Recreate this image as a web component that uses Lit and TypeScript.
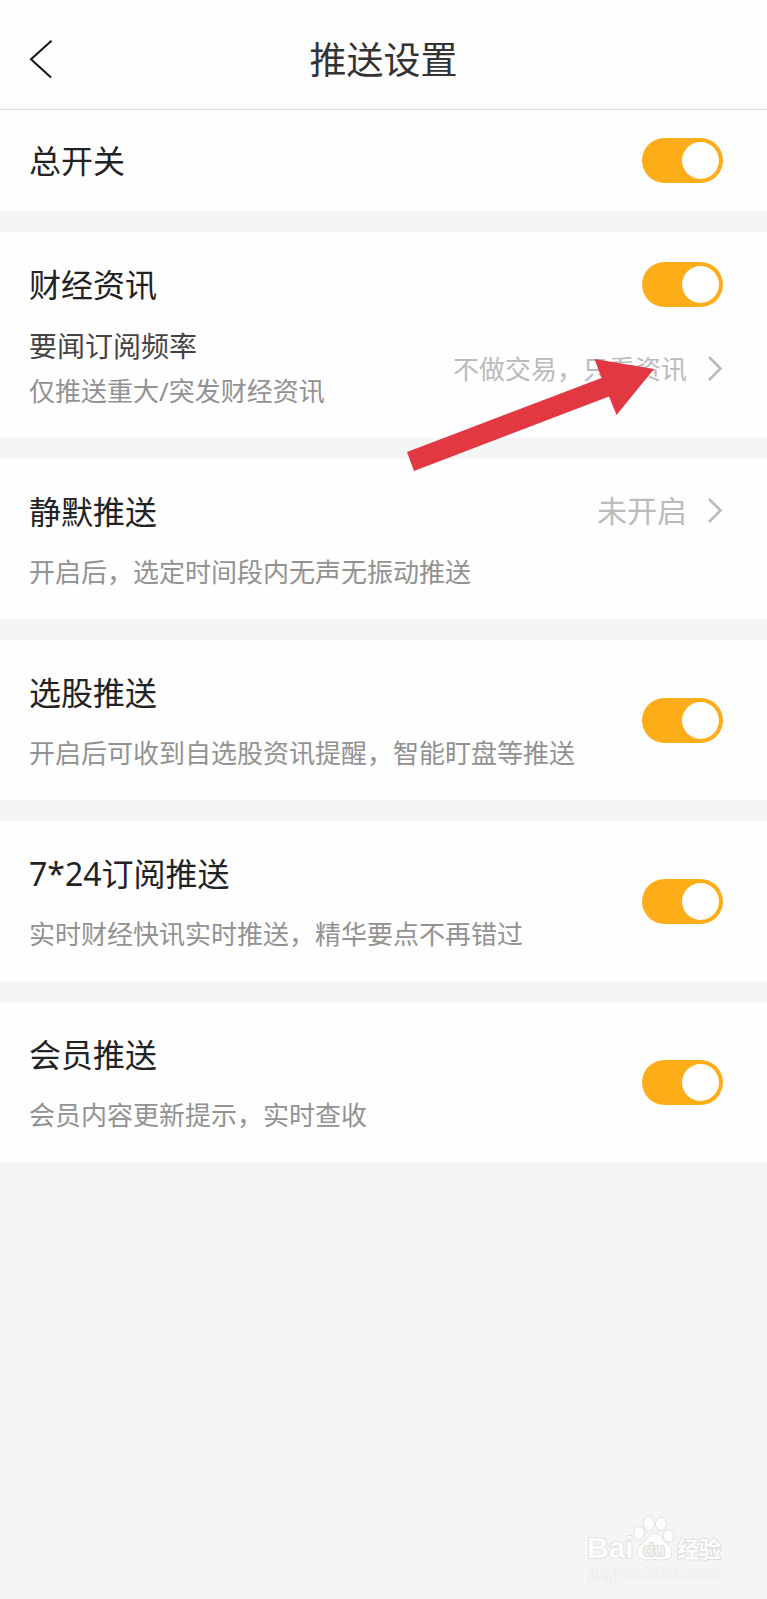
import { LitElement, html, css, svg, nothing } from "lit";
import { customElement, property } from "lit/decorators.js";

const chevron = html`<svg class="chevron" viewBox="0 0 16 26" aria-hidden="true">
  <path d="M2 1 13.500 12.500 2 24" fill="none" stroke="currentColor" stroke-width="2.6" />
</svg>`;

@customElement("toggle-switch")
class ToggleSwitch extends LitElement {
  @property() label = "";

  static styles = css`
    :host {
      display: block;
      flex: none;
    }
    .switch {
      appearance: none;
      display: flex;
      align-items: center;
      box-sizing: border-box;
      width: 81px;
      height: 45px;
      margin: 0;
      padding: 4px;
      border-radius: 23px;
      background: #d8d8d8;
      cursor: pointer;
    }
    .switch::before {
      content: "";
      width: 37px;
      height: 37px;
      border-radius: 50%;
      background: #fff;
    }
    .switch:checked {
      background: #fcad18;
      justify-content: flex-end;
    }
  `;

  render() {
    return html`<input class="switch" type="checkbox" role="switch" aria-label=${this.label} checked />`;
  }
}

@customElement("setting-row")
class SettingRow extends LitElement {
  @property() heading = "";
  @property() note = "";
  @property() value = "";

  static styles = css`
    :host {
      display: block;
      background: #fefefe;
    }
    .row {
      display: flex;
      align-items: center;
      justify-content: space-between;
      gap: 16px;
      padding: 28px 44px 28px 29px;
    }
    .row.detailed {
      padding-top: 25px;
      padding-bottom: 24px;
    }
    .detailed .texts {
      padding-top: 5px;
    }
    .texts {
      display: flex;
      flex-direction: column;
      gap: 16px;
    }
    .heading,
    .note {
      margin: 0;
      font-weight: 400;
      line-height: 45px;
    }
    .heading {
      font-size: 32px;
      color: #222;
    }
    .note {
      font-size: 26px;
      color: #929292;
    }
    .value {
      display: flex;
      align-items: center;
      align-self: flex-start;
      gap: 20px;
      flex: none;
      padding: 4px 0 0;
      border: 0;
      background: none;
      font: inherit;
      font-size: 30px;
      line-height: 45px;
      color: #bbb;
      cursor: pointer;
    }
    .chevron {
      width: 16px;
      height: 26px;
    }
  `;

  render() {
    return html`<div class="row ${this.note ? "detailed" : ""}">
      <div class="texts">
        <h2 class="heading">${this.heading}</h2>
        ${this.note ? html`<p class="note">${this.note}</p>` : nothing}
      </div>
      ${this.value
        ? html`<button class="value">${this.value}${chevron}</button>`
        : html`<toggle-switch .label=${this.heading}></toggle-switch>`}
    </div>`;
  }
}

@customElement("news-section")
class NewsSection extends LitElement {
  static styles = css`
    :host {
      display: block;
      position: relative;
      background: #fefefe;
    }
    .section {
      display: flex;
      flex-direction: column;
      gap: 17px;
      padding: 30px 44px 24px 29px;
    }
    .line {
      display: flex;
      align-items: center;
      justify-content: space-between;
      gap: 16px;
    }
    .heading,
    .sub,
    .note {
      margin: 0;
      font-weight: 400;
      line-height: 45px;
    }
    .heading {
      font-size: 32px;
      color: #222;
    }
    .sub {
      font-size: 28px;
      color: #444;
    }
    .note {
      font-size: 26px;
      color: #929292;
    }
    .value {
      display: flex;
      align-items: center;
      gap: 20px;
      flex: none;
      padding: 0;
      border: 0;
      background: none;
      font: inherit;
      font-size: 26px;
      line-height: 45px;
      color: #bbb;
      cursor: pointer;
    }
    .chevron {
      width: 16px;
      height: 26px;
    }
    .pointer {
      position: absolute;
      top: 127px;
      right: 113px;
      width: 247px;
      height: 112px;
      z-index: 1;
      pointer-events: none;
    }
  `;

  render() {
    return html`<div class="section">
        <div class="line">
          <h2 class="heading">财经资讯</h2>
          <toggle-switch .label=${"财经资讯"}></toggle-switch>
        </div>
        <div class="line">
          <div>
            <h3 class="sub">要闻订阅频率</h3>
            <p class="note">仅推送重大/突发财经资讯</p>
          </div>
          <button class="value">不做交易，只看资讯${chevron}</button>
        </div>
      </div>
      <svg class="pointer" viewBox="0 0 247 112" aria-hidden="true">
        <path d="M0 93 194.500 19 187.500 0 247 10 209.500 56 202 37.500 7 112Z" fill="#e23842" />
      </svg>`;
  }
}

const paw = svg`
  <ellipse cx="19" cy="18" rx="5" ry="6.500" />
  <ellipse cx="29" cy="8.500" rx="5" ry="7" />
  <ellipse cx="41" cy="9" rx="5" ry="6.500" />
  <ellipse cx="48.500" cy="21" rx="5" ry="6" />
  <path d="M35 19C29 19 27 24 23 28C18 32 16 36 18 40C20 45 26 45 34.500 44C43 45 49 45 51 40C52 35 50 32 46 28C42 24 41 19 35 19Z" />`;

@customElement("app-root")
class AppRoot extends LitElement {
  static styles = css`
    :host {
      display: flex;
      flex-direction: column;
      min-height: 100vh;
      background: #f5f5f5;
      font-family: "Noto Sans", "Noto Sans CJK SC", sans-serif;
    }
    .bar {
      display: grid;
      grid-template-columns: 1fr auto 1fr;
      align-items: center;
      padding: 37px 28px 27px;
      border-bottom: 1px solid #dedede;
      background: #fefefe;
    }
    .back {
      justify-self: start;
      display: flex;
      padding: 0;
      border: 0;
      background: none;
      color: #111;
      cursor: pointer;
    }
    .back-icon {
      width: 26px;
      height: 40px;
    }
    .title {
      margin: 0;
      font-size: 37px;
      font-weight: 400;
      line-height: 45px;
      color: #333;
    }
    .list {
      display: flex;
      flex-direction: column;
      gap: 21px;
    }
    .mark {
      align-self: flex-end;
      margin-top: auto;
      padding: 24px 40px 12px 0;
    }
    .mark-art {
      display: block;
      width: 140px;
      height: 70px;
      overflow: visible;
    }
    .outlined {
      fill: #fdfdfd;
      stroke: #dcdcdc;
      stroke-width: 1.6px;
      paint-order: stroke;
    }
    .brand {
      font: 700 30px "Liberation Sans", sans-serif;
    }
    .inner {
      font: 700 18px "Liberation Sans", sans-serif;
      fill: #f3f3f3;
      stroke: #d4d4d4;
    }
    .brand-cjk {
      font: 700 22px "Liberation Sans", "Noto Sans CJK SC", sans-serif;
    }
    .site {
      font: 400 15px "Noto Sans", sans-serif;
      fill: #fcfcfc;
      stroke: #e4e4e4;
      stroke-width: 1.2px;
      paint-order: stroke;
    }
  `;

  render() {
    return html`
      <header class="bar">
        <button class="back" aria-label="返回">
          <svg class="back-icon" viewBox="0 0 26 40" aria-hidden="true">
            <path d="M23.500 0.800 3 19.200 23 37.500" fill="none" stroke="currentColor" stroke-width="2" />
          </svg>
        </button>
        <h1 class="title">推送设置</h1>
      </header>
      <main class="list">
        <setting-row heading="总开关"></setting-row>
        <news-section></news-section>
        <setting-row heading="静默推送" note="开启后，选定时间段内无声无振动推送" value="未开启"></setting-row>
        <setting-row heading="选股推送" note="开启后可收到自选股资讯提醒，智能盯盘等推送"></setting-row>
        <setting-row heading="7*24订阅推送" note="实时财经快讯实时推送，精华要点不再错过"></setting-row>
        <setting-row heading="会员推送" note="会员内容更新提示，实时查收"></setting-row>
      </main>
      <footer class="mark">
        <svg class="mark-art" viewBox="0 0 140 70">
          <text class="outlined brand" x="0" y="41">Bai</text>
          <g class="outlined" transform="translate(33 -2)">${paw}</g>
          <text class="outlined inner" x="56" y="39">du</text>
          <text class="outlined brand-cjk" x="90" y="40">经验</text>
          <text class="site" x="2" y="61">jingyan.baidu.com</text>
        </svg>
      </footer>
    `;
  }
}
